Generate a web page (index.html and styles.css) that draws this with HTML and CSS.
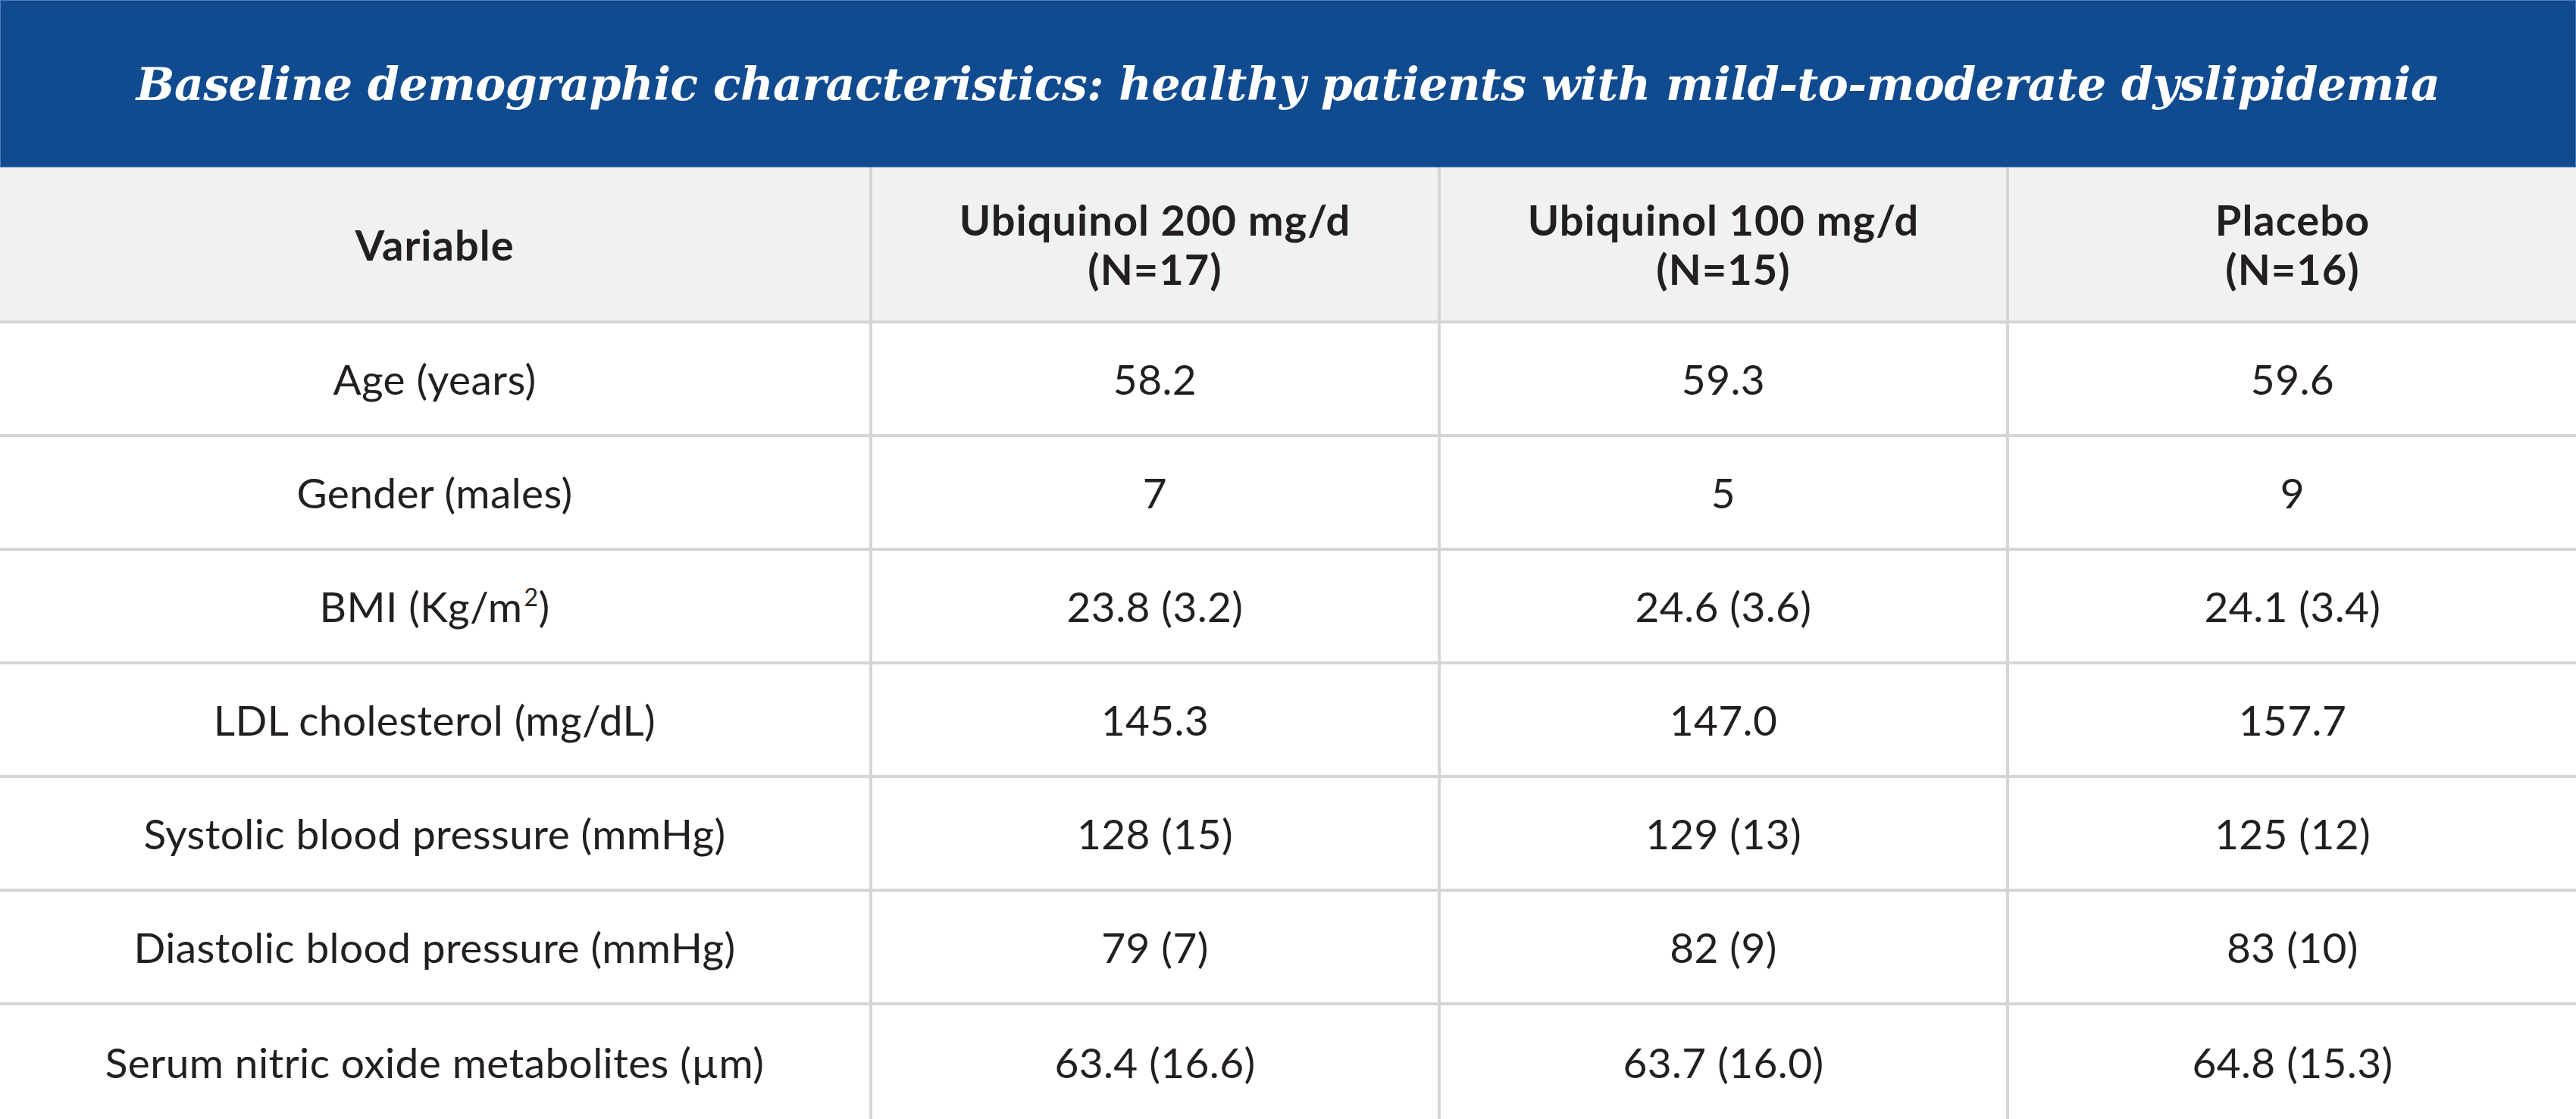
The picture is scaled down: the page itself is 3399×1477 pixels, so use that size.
FILE: index.html
```html
<!DOCTYPE html>
<html lang="en">
<head>
<meta charset="utf-8">
<title>Baseline demographic characteristics</title>
<link rel="stylesheet" href="styles.css">
</head>
<body>
<div class="page">
  <header class="title-bar">
    <h1 class="title">Baseline demographic characteristics: healthy patients with mild-to-moderate dyslipidemia</h1>
  </header>
  <div class="grid">
    <div class="cell head">Variable</div>
    <div class="cell head">Ubiquinol 200 mg/d<br>(N=17)</div>
    <div class="cell head">Ubiquinol 100 mg/d<br>(N=15)</div>
    <div class="cell head">Placebo<br>(N=16)</div>

    <div class="cell">Age (years)</div>
    <div class="cell">58.2</div>
    <div class="cell">59.3</div>
    <div class="cell">59.6</div>

    <div class="cell">Gender (males)</div>
    <div class="cell">7</div>
    <div class="cell">5</div>
    <div class="cell">9</div>

    <div class="cell">BMI (Kg/m<sup class="sup">2</sup>)</div>
    <div class="cell">23.8 (3.2)</div>
    <div class="cell">24.6 (3.6)</div>
    <div class="cell">24.1 (3.4)</div>

    <div class="cell">LDL cholesterol (mg/dL)</div>
    <div class="cell">145.3</div>
    <div class="cell">147.0</div>
    <div class="cell">157.7</div>

    <div class="cell">Systolic blood pressure (mmHg)</div>
    <div class="cell">128 (15)</div>
    <div class="cell">129 (13)</div>
    <div class="cell">125 (12)</div>

    <div class="cell">Diastolic blood pressure (mmHg)</div>
    <div class="cell">79 (7)</div>
    <div class="cell">82 (9)</div>
    <div class="cell">83 (10)</div>

    <div class="cell">Serum nitric oxide metabolites (µm)</div>
    <div class="cell">63.4 (16.6)</div>
    <div class="cell">63.7 (16.0)</div>
    <div class="cell">64.8 (15.3)</div>
  </div>
</div>
</body>
</html>
```
FILE: styles.css
```css
html, body {
  margin: 0;
  padding: 0;
  background: #ffffff;
}
body {
  width: 3399px;
  height: 1477px;
  overflow: hidden;
}
.page {
  display: flex;
  flex-direction: column;
  width: 3399px;
}
.title-bar {
  height: 221px;
  box-sizing: border-box;
  background: #114b8f;
  border: 1px solid #4f7db5;
  display: flex;
  align-items: center;
  justify-content: center;
}
.title {
  margin: 0;
  color: #ffffff;
  font-family: "DejaVu Serif", "Liberation Serif", serif;
  font-weight: bold;
  font-style: italic;
  font-size: 60px;
  line-height: 1;
  white-space: nowrap;
  letter-spacing: -0.5px;
}
.grid {
  display: grid;
  grid-template-columns: 1147px 746px 746px 748px;
  grid-template-rows: 202px repeat(6, 146px) 150px;
  gap: 4px;
  background: #d4d5d7;
}
.cell {
  background: #ffffff;
  display: flex;
  align-items: center;
  justify-content: center;
  text-align: center;
  font-family: "Lato", "Noto Sans", sans-serif;
  font-size: 55px;
  line-height: 65px;
  letter-spacing: 0.4px;
  color: #231f20;
}
.head {
  background: #f0f2f1;
  font-weight: bold;
  font-size: 56px;
  letter-spacing: 1px;
}
.sup {
  font-size: 32px;
  line-height: 0;
  position: relative;
  top: -12px;
  margin-left: 2px;
  vertical-align: super;
}
```
